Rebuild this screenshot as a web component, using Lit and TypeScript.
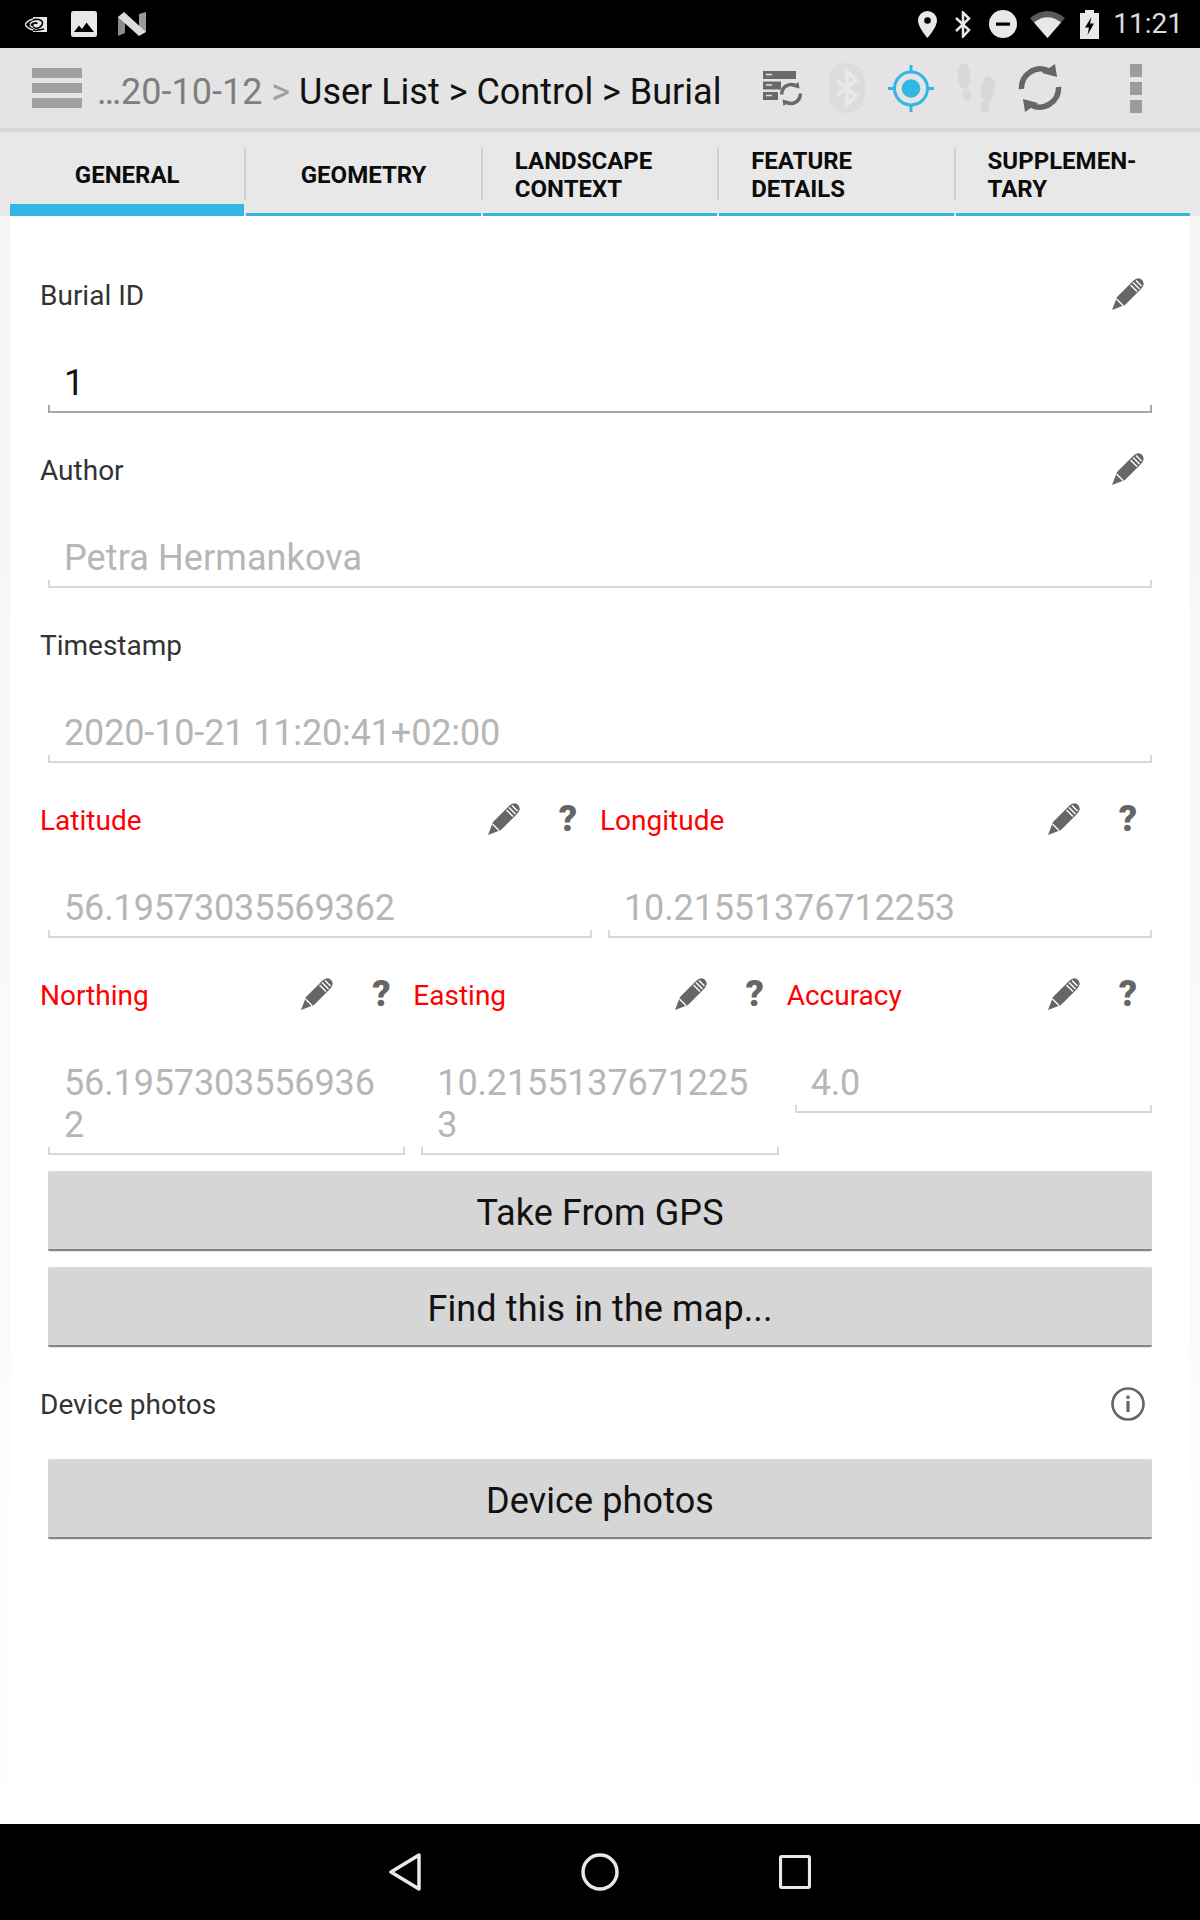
import { LitElement, html, css, svg } from 'lit';
import { customElement } from 'lit/decorators.js';

// sync arrows, used big in the toolbar and small over the server rack
const syncArrows = (weight: number) => svg`
  <path d="M3.5 25A19 19 0 0 1 31 7M40.5 23A19 19 0 0 1 13 41" fill="none" stroke="currentColor" stroke-width=${weight}/>
  <path d="M37 0L39 13L24 9ZM7 48L5 35L20 39Z" fill="currentColor"/>`;

const pencil = html`<svg width="32" height="32" viewBox="0 0 32 32">
  <path d="M0 32L5 19L21 3Q25 -1 29 1Q33 4 31 8Q30 10 28 12L13 27Z" fill="#666"/>
  <path d="M4.5 21L11 27.5M18.5 7L25 13.5M21 4.5L27.5 11M24 2.5L29.5 8" stroke="#fff" stroke-width="1.4" fill="none"/>
</svg>`;

const info = html`<svg width="36" height="36" viewBox="0 0 36 36">
  <circle cx="18" cy="18" r="15.5" fill="none" stroke="#666" stroke-width="2.6"/>
  <rect x="16.4" y="15" width="3.2" height="11" fill="#666"/>
  <rect x="16.4" y="9.5" width="3.2" height="3.4" fill="#666"/>
</svg>`;

interface Field {
  label: string;
  value: string;
  required?: boolean;
  edit?: boolean;
  help?: boolean;
  active?: boolean;
}

const rows: Field[][] = [
  [{ label: 'Burial ID', value: '1', edit: true, active: true }],
  [{ label: 'Author', value: 'Petra Hermankova', edit: true }],
  [{ label: 'Timestamp', value: '2020-10-21 11:20:41+02:00' }],
  [
    { label: 'Latitude', value: '56.19573035569362', required: true, edit: true, help: true },
    { label: 'Longitude', value: '10.21551376712253', required: true, edit: true, help: true },
  ],
  [
    { label: 'Northing', value: '56.19573035569362', required: true, edit: true, help: true },
    { label: 'Easting', value: '10.21551376712253', required: true, edit: true, help: true },
    { label: 'Accuracy', value: '4.0', required: true, edit: true, help: true },
  ],
];

const tabs = [
  { lines: ['GENERAL'], active: true },
  { lines: ['GEOMETRY'] },
  { lines: ['LANDSCAPE', 'CONTEXT'] },
  { lines: ['FEATURE', 'DETAILS'] },
  { lines: ['SUPPLEMEN-', 'TARY'] },
];

@customElement('app-root')
export class AppRoot extends LitElement {
  static styles = css`
    :host {
      display: flex;
      flex-direction: column;
      height: 1920px;
      font-family: Roboto, "Liberation Sans", sans-serif;
      background: linear-gradient(#f3f3f3, #ffffff);
    }
    svg {
      display: block;
      flex: none;
    }

    /* android status bar */
    .status {
      height: 48px;
      background: #000;
      display: flex;
      align-items: center;
      justify-content: space-between;
      padding: 0 17px 0 25px;
      color: #e8e8e8;
    }
    .status-left,
    .status-right {
      display: flex;
      align-items: center;
    }
    .status-left .image {
      margin-left: 24px;
    }
    .status-left .logo {
      margin-left: 21px;
    }
    .status-right .bt {
      margin-left: 17px;
    }
    .status-right .dnd {
      margin-left: 16px;
    }
    .status-right .wifi {
      margin-left: 13px;
    }
    .status-right .battery {
      margin-left: 15px;
    }
    .time {
      margin-left: 14px;
      font-size: 28px;
      line-height: 48px;
      color: #dcdcdc;
    }

    /* action bar */
    .toolbar {
      height: 80px;
      background: #e4e4e4;
      border-bottom: 4px solid #d8d8d8;
      display: flex;
      align-items: center;
      padding: 0 58px 0 32px;
    }
    .burger {
      width: 50px;
      height: 40px;
      display: flex;
      flex-direction: column;
      justify-content: space-between;
      margin-right: 15px;
    }
    .burger span {
      height: 10px;
      background: #a0a0a0;
    }
    .crumbs {
      font-size: 36px;
      color: #111;
      white-space: nowrap;
      flex: 1;
      padding-top: 8px;
    }
    .crumbs .dim {
      color: #7e7e7e;
    }
    .crumbs .dimmer {
      color: #a0a0a0;
    }
    .tools {
      display: flex;
      align-items: center;
      gap: 23px;
      color: #666;
    }
    .tools .bt {
      margin-left: 3px;
    }
    .tools .dots {
      margin-left: 45px;
      display: flex;
      flex-direction: column;
      gap: 5px;
    }
    .dots span {
      width: 12px;
      height: 13px;
      background: #9c9c9c;
    }

    /* tab strip */
    .tabs {
      height: 84px;
      background: #e8e8e8;
      display: grid;
      grid-template-columns: repeat(5, minmax(0, 1fr));
      gap: 2px;
      padding: 0 10px;
    }
    .tab {
      box-sizing: border-box;
      position: relative;
      display: flex;
      align-items: center;
      justify-content: center;
      font-size: 24px;
      font-weight: 700;
      line-height: 28px;
      color: #0c0c0c;
      border-bottom: 3px solid #33b5e5;
      padding-top: 5px;
    }
    .tab.wrapped {
      justify-content: flex-start;
      padding-left: 32px;
    }
    .tab.active {
      border-bottom-width: 12px;
      padding-top: 14px;
    }
    .tab:not(:last-child)::after {
      content: '';
      position: absolute;
      right: -2px;
      top: 16px;
      height: 52px;
      width: 2px;
      background: #d0d0d0;
    }

    /* form */
    .form {
      flex: 1;
      margin: 0 10px;
      background: #fff;
      padding: 34px 38px 0 30px;
    }
    .row {
      display: flex;
      gap: 8px;
      align-items: flex-start;
      margin-bottom: 12px;
    }
    .field {
      flex: 1 1 0;
      min-width: 0;
    }
    .label-row {
      height: 90px;
      display: flex;
      align-items: center;
      justify-content: space-between;
    }
    .label {
      font-size: 28px;
      color: #333;
    }
    .label.required {
      color: #ff0000;
    }
    .actions {
      display: flex;
      align-items: center;
      gap: 16px;
      padding-bottom: 3px;
    }
    .action {
      width: 48px;
      display: flex;
      justify-content: center;
    }
    .help {
      font-size: 36px;
      font-weight: 900;
      color: #666;
      line-height: 40px;
    }
    .input {
      position: relative;
      margin-left: 8px;
      padding: 22px 16px 7px;
      font-size: 36px;
      line-height: 42px;
      letter-spacing: 0.1px;
      color: #b6b6b6;
      border-bottom: 2px solid #d8d8d8;
      word-break: break-all;
    }
    .input.num {
      letter-spacing: -0.14px;
    }
    .input.active {
      color: #111;
      border-bottom-color: #a6a6a6;
    }
    .input::before,
    .input::after {
      content: '';
      position: absolute;
      bottom: 0;
      width: 2px;
      height: 6px;
      background: #d8d8d8;
    }
    .input.active::before,
    .input.active::after {
      background: #a6a6a6;
    }
    .input::before {
      left: 0;
    }
    .input::after {
      right: 0;
    }
    .buttons {
      margin: 16px 0 12px 8px;
      display: flex;
      flex-direction: column;
      gap: 16px;
    }
    .button {
      height: 80px;
      box-sizing: border-box;
      background: #d6d6d6;
      border-top: 1px solid #dcdcdc;
      border-bottom: 2px solid #858585;
      border-radius: 2px;
      display: flex;
      align-items: center;
      justify-content: center;
      padding-top: 4px;
      font-size: 36px;
      letter-spacing: 0.1px;
      color: #111;
      box-shadow: 0 1px 1px #e4e4e4;
    }
    .button.single {
      margin: 10px 0 0 8px;
    }
    .info-actions {
      padding-bottom: 0;
    }

    /* navigation bar */
    .nav {
      height: 96px;
      background: #000;
      display: flex;
      align-items: center;
      justify-content: center;
      gap: 160px;
    }
  `;

  renderField(f: Field) {
    const num = !/[a-z]/i.test(f.value);
    return html`<div class="field">
      <div class="label-row">
        <span class="label ${f.required ? 'required' : ''}">${f.label}</span>
        <div class="actions">
          ${f.edit ? html`<div class="action">${pencil}</div>` : ''}
          ${f.help ? html`<div class="action help">?</div>` : ''}
        </div>
      </div>
      <div class="input ${f.active ? 'active' : ''} ${num ? 'num' : ''}">${f.value}</div>
    </div>`;
  }

  render() {
    return html`
      <div class="status">
        <div class="status-left">
          <svg width="22" height="15" viewBox="0 0 22 15">
            <path d="M8 0H22V15H8Z" fill="#e8e8e8"/>
            <path d="M1 7.5Q6 1.5 14 2.5Q19 4 17 8Q14 12 10 11Q6.5 9.5 8 7Q10 5 12.5 6.5" fill="none" stroke="#000" stroke-width="1.6"/>
            <path d="M1 8Q5 13 11 13.5L19 12" fill="none" stroke="#000" stroke-width="1.6"/>
            <path d="M0 7.5Q3 3 8 2M0 7.5Q3 12 8 13M5 7.5Q6 5 8 4.5M5 8Q6 10 8 10.5" fill="none" stroke="#e8e8e8" stroke-width="1.5"/>
          </svg>
          <svg class="image" width="26" height="26" viewBox="0 0 26 26">
            <rect width="26" height="26" rx="2.5" fill="#e8e8e8"/>
            <path d="M3 21L8 14.5L11 18L15.5 11.5L23 21Z" fill="#000"/>
          </svg>
          <svg class="logo" width="28" height="24" viewBox="0 0 28 24">
            <path d="M0 5L7 3V21L0 24Z" fill="#8a8a8a"/>
            <path d="M21 2L28 0V20L21 21Z" fill="#999"/>
            <path d="M0 5L6 0L28 20L21 24Z" fill="#dcdcdc"/>
          </svg>
        </div>
        <div class="status-right">
          <svg width="19" height="27" viewBox="0 0 19 27">
            <path fill-rule="evenodd" d="M9.5 0A9.5 9.5 0 0 1 19 9.5C19 16 9.5 27 9.5 27S0 16 0 9.5A9.5 9.5 0 0 1 9.5 0ZM9.5 6.2A3.3 3.3 0 1 0 9.5 12.8A3.3 3.3 0 1 0 9.5 6.2Z" fill="#e8e8e8"/>
          </svg>
          <svg class="bt" width="19" height="27" viewBox="0 0 19 27">
            <path d="M2 7L15 19L9 25.500V1.500L15 7.500L2 20" fill="none" stroke="#e8e8e8" stroke-width="2.500"/>
          </svg>
          <svg class="dnd" width="28" height="28" viewBox="0 0 28 28">
            <circle cx="14" cy="14" r="14" fill="#e8e8e8"/>
            <rect x="7" y="12.500" width="14" height="3.200" fill="#000"/>
          </svg>
          <svg class="wifi" width="35" height="28" viewBox="0 0 35 28">
            <path d="M17.500 28L0 8Q17.500 -6 35 8Z" fill="#5a5a5a"/>
            <path d="M17.500 28L4 12.500Q17.500 2 31 12.500Z" fill="#e8e8e8"/>
          </svg>
          <svg class="battery" width="19" height="29" viewBox="0 0 19 29">
            <path d="M5 0H14V3H19V29H0V3H5Z" fill="#e8e8e8"/>
            <path d="M11.500 7L5 17.500H9L7.500 25L14 13.500H10Z" fill="#000"/>
          </svg>
          <span class="time">11:21</span>
        </div>
      </div>

      <div class="toolbar">
        <div class="burger"><span></span><span></span><span></span></div>
        <div class="crumbs"><span class="dim">…20-10-12</span> <span class="dimmer">&gt;</span> User List &gt; Control &gt; Burial</div>
        <div class="tools">
          <svg width="40" height="35" viewBox="0 0 40 35">
            <path d="M0 0H33V8H0ZM0 10.500H18V18.500H0ZM0 21H15V29H0Z" fill="#6a6a6a"/>
            <path d="M3 3.500H9M3 14H9M3 24.500H9" stroke="#e4e4e4" stroke-width="1.500"/>
            <svg x="16" y="11" width="24" height="24" viewBox="0 0 44 48" color="#6a6a6a">${syncArrows(7)}</svg>
          </svg>
          <svg class="bt" width="36" height="50" viewBox="0 0 36 50">
            <rect width="36" height="50" rx="17" fill="#dcdcdc"/>
            <path d="M8 18L27 33L18 42V8L27 17L8 32" fill="none" stroke="#e8e8e8" stroke-width="4"/>
          </svg>
          <svg width="46" height="47" viewBox="0 0 46 47">
            <circle cx="23" cy="23.500" r="16.500" fill="none" stroke="#33b5e5" stroke-width="3"/>
            <circle cx="23" cy="23.500" r="9.300" fill="#33b5e5"/>
            <path d="M23 0V8M23 39V47M0 23.500H8M38 23.500H46" stroke="#33b5e5" stroke-width="3"/>
          </svg>
          <svg width="38" height="50" viewBox="0 0 38 50">
            <g fill="#d8d8d8">
              <ellipse cx="7" cy="13" rx="6.500" ry="13" transform="rotate(-4 7 13)"/>
              <ellipse cx="10" cy="32" rx="4.500" ry="5.500"/>
              <ellipse cx="31" cy="26" rx="7" ry="13" transform="rotate(6 31 26)"/>
              <ellipse cx="28" cy="44" rx="4.500" ry="6"/>
            </g>
          </svg>
          <svg width="44" height="48" viewBox="0 0 44 48">${syncArrows(5.5)}</svg>
          <div class="dots"><span></span><span></span><span></span></div>
        </div>
      </div>

      <div class="tabs">
        ${tabs.map(
          (t) => html`<div class="tab ${t.active ? 'active' : ''} ${t.lines.length > 1 ? 'wrapped' : ''}">
            <div>${t.lines.map((l) => html`<div>${l}</div>`)}</div>
          </div>`,
        )}
      </div>

      <div class="form">
        ${rows.map((r) => html`<div class="row">${r.map((f) => this.renderField(f))}</div>`)}
        <div class="buttons">
          <div class="button">Take From GPS</div>
          <div class="button">Find this in the map...</div>
        </div>
        <div class="label-row">
          <span class="label">Device photos</span>
          <div class="actions info-actions"><div class="action">${info}</div></div>
        </div>
        <div class="button single">Device photos</div>
      </div>

      <div class="nav">
        <svg width="32" height="38" viewBox="0 0 32 38">
          <path d="M30 2V36L2 19Z" fill="none" stroke="#e8e8e8" stroke-width="3.500" stroke-linejoin="round"/>
        </svg>
        <svg width="38" height="38" viewBox="0 0 38 38">
          <circle cx="19" cy="19" r="17" fill="none" stroke="#e8e8e8" stroke-width="3.500"/>
        </svg>
        <svg width="32" height="34" viewBox="0 0 32 34">
          <rect x="1.500" y="1.500" width="29" height="31" rx="1.500" fill="none" stroke="#e8e8e8" stroke-width="3.200"/>
        </svg>
      </div>
    `;
  }
}
